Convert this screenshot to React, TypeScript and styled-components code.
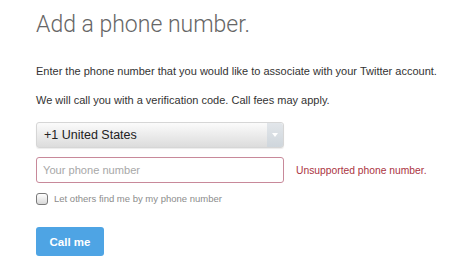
import React from "react";
import styled, { createGlobalStyle } from "styled-components";

const GlobalStyle = createGlobalStyle`
  html, body {
    margin: 0;
    padding: 0;
    background: #ffffff;
  }
  body {
    font-family: "Liberation Sans", Arial, sans-serif;
  }
`;

const App: React.FC = () => {
  return (
    <>
      <GlobalStyle />
      <Page>
        <Title>Add a phone number.</Title>
        <Text>
          Enter the phone number that you would like to associate with your
          Twitter account.
        </Text>
        <Text>We will call you with a verification code. Call fees may apply.</Text>

        <Select>
          <SelectLabel>+1 United States</SelectLabel>
          <Arrow>
            <svg width="6" height="4" viewBox="0 0 6 4">
              <path d="M0 0 L6 0 L3 4 Z" fill="#ffffff" />
            </svg>
          </Arrow>
        </Select>

        <InputRow>
          <PhoneInput placeholder="Your phone number" />
          <Error>Unsupported phone number.</Error>
        </InputRow>

        <CheckRow>
          <Check />
          <CheckLabel>Let others find me by my phone number</CheckLabel>
        </CheckRow>

        <Button>Call me</Button>
      </Page>
    </>
  );
};

export default App;

const Page = styled.div`
  padding: 12px 0 0 36px;
  display: flex;
  flex-direction: column;
  align-items: flex-start;
`;

const Title = styled.h1`
  margin: 0 0 26px;
  font-family: Roboto, "Liberation Sans", Arial, sans-serif;
  font-weight: 300;
  font-size: 23px;
  line-height: 26px;
  color: #666666;
  white-space: nowrap;
`;

const Text = styled.p`
  margin: 0 0 15px;
  font-size: 11px;
  line-height: 14px;
  color: #333333;
  white-space: nowrap;
`;

const Select = styled.div`
  box-sizing: border-box;
  width: 248px;
  height: 26px;
  display: flex;
  align-items: center;
  justify-content: space-between;
  border-radius: 3px;
  border: 1px solid #d6d6d6;
  background: linear-gradient(#fbfbfb, #dcdcdc);
  box-shadow: 0 1px 1px rgba(0, 0, 0, 0.08);
`;

const SelectLabel = styled.span`
  padding-left: 7px;
  font-size: 12.5px;
  color: #222222;
`;

const Arrow = styled.span`
  width: 16px;
  height: 24px;
  display: flex;
  align-items: center;
  justify-content: center;
  background: linear-gradient(#e2e6ea, #cfd6dc);
  border-radius: 0 3px 3px 0;
`;

const InputRow = styled.div`
  margin-top: 9px;
  display: flex;
  align-items: center;
  gap: 12px;
`;

const PhoneInput = styled.input`
  box-sizing: border-box;
  width: 248px;
  height: 26px;
  padding: 0 6px;
  border: 1px solid #c8899a;
  border-radius: 3px;
  font-family: "Liberation Sans", Arial, sans-serif;
  font-size: 11.1px;
  outline: none;
  &::placeholder {
    color: #a8a8a8;
  }
`;

const Error = styled.span`
  font-size: 10.3px;
  color: #ab3442;
  white-space: nowrap;
`;

const CheckRow = styled.label`
  margin-top: 10px;
  display: flex;
  align-items: center;
  gap: 6px;
`;

const Check = styled.span`
  box-sizing: border-box;
  width: 12px;
  height: 12px;
  border: 1px solid #7a7a7a;
  border-radius: 3px;
  background: linear-gradient(#ffffff, #d8d8d8);
`;

const CheckLabel = styled.span`
  font-size: 9.5px;
  line-height: 12px;
  color: #8c8c8c;
`;

const Button = styled.button`
  margin-top: 22px;
  width: 68px;
  height: 29px;
  border: none;
  border-radius: 3px;
  background: #4ea4e4;
  color: #ffffff;
  font-family: "Liberation Sans", Arial, sans-serif;
  font-weight: 700;
  font-size: 11.5px;
  padding: 0;
`;
